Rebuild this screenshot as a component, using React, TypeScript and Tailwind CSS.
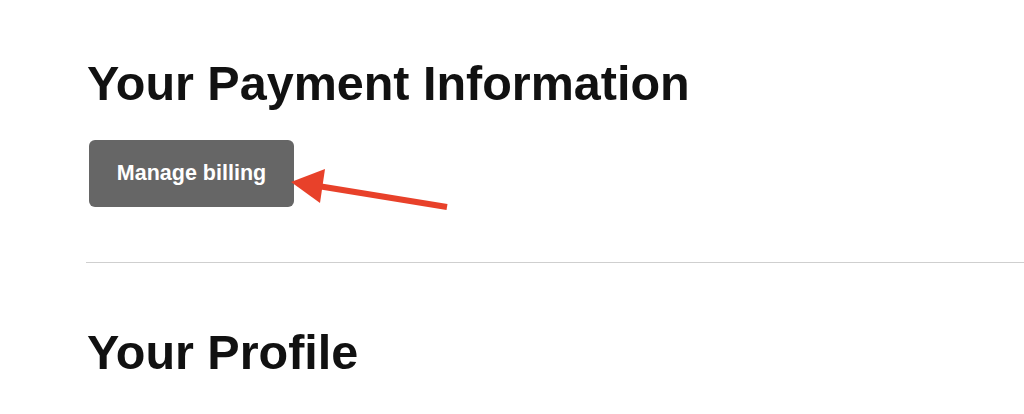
import React from "react";

export default function App() {
  return (
    <div className="relative min-h-[414px] w-[1024px] overflow-hidden bg-white font-['Liberation_Sans',Arial,sans-serif] text-[#111111]">
      <div className="pl-[87px] pt-[59px]">
        <h1 className="text-[48.5px] font-bold leading-[49px]">Your Payment Information</h1>
        <div className="relative mt-[32px]">
          <button className="ml-[2px] flex h-[67px] w-[205px] items-center justify-center rounded-[6px] bg-[#666666] text-[21.5px] font-bold text-white">
            Manage billing
          </button>
          <svg
            className="absolute left-0 top-0"
            width="460"
            height="80"
            viewBox="87 140 460 80"
          >
            <line x1="318" y1="186" x2="447" y2="207" stroke="#e8412a" strokeWidth="6" />
            <polygon points="291,182 325,169 320,203" fill="#e8412a" />
          </svg>
        </div>
        <div className="ml-[-1px] mt-[55px] h-[1px] bg-[#cfcfcf]" />
        <h2 className="mt-[65px] text-[48.5px] font-bold leading-[49px]">Your Profile</h2>
      </div>
    </div>
  );
}
